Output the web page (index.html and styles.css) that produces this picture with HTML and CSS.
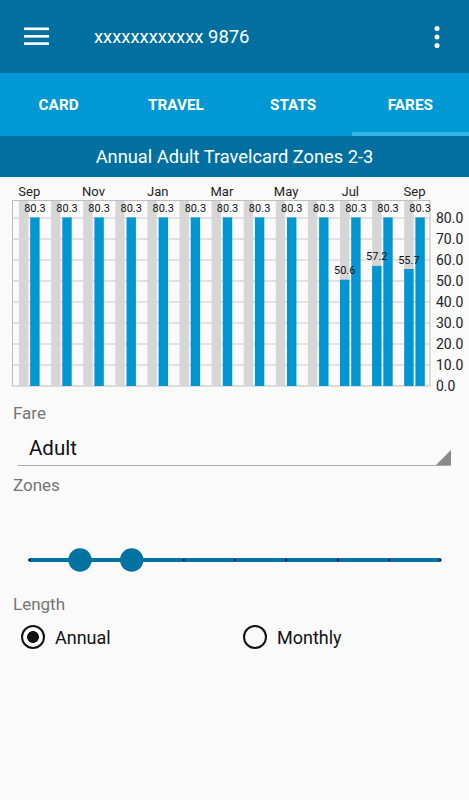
FILE: index.html
```html
<!DOCTYPE html>
<html lang="en">
<head>
  <meta charset="UTF-8">
  <title>Fares</title>
  <link rel="stylesheet" href="styles.css">
</head>
<body>

<header class="appbar">
  <svg class="menu-icon" width="26" height="20" viewBox="0 0 26 20">
    <rect x="0" y="0.5" width="25" height="2.6" fill="#fff"/>
    <rect x="0" y="8" width="25" height="2.6" fill="#fff"/>
    <rect x="0" y="15.3" width="25" height="2.6" fill="#fff"/>
  </svg>
  <div class="title">xxxxxxxxxxxx 9876</div>
  <svg class="more-icon" width="6" height="24" viewBox="0 0 6 24">
    <circle cx="3" cy="3.5" r="2.5" fill="#fff"/>
    <circle cx="3" cy="12" r="2.5" fill="#fff"/>
    <circle cx="3" cy="20.5" r="2.5" fill="#fff"/>
  </svg>
</header>

<nav class="tabs">
  <div class="tab">CARD</div>
  <div class="tab">TRAVEL</div>
  <div class="tab">STATS</div>
  <div class="tab active">FARES</div>
</nav>

<div class="subtitle">Annual Adult Travelcard Zones 2-3</div>

<!-- fare history chart -->
<svg class="chart" width="469" height="217" viewBox="0 0 469 217">
  <defs>
    <g id="grp">
      <rect x="19" y="24" width="9.4" height="185" fill="#d6d6d6"/>
      <rect x="30.2" y="40.4" width="9.4" height="168.6" fill="#0095d3"/>
      <text x="34.9" y="34.9" class="val">80.3</text>
    </g>
  </defs>

  <g class="grid">
    <line x1="12" y1="41" x2="430" y2="41"/>
    <line x1="12" y1="62" x2="430" y2="62"/>
    <line x1="12" y1="83" x2="430" y2="83"/>
    <line x1="12" y1="104" x2="430" y2="104"/>
    <line x1="12" y1="125" x2="430" y2="125"/>
    <line x1="12" y1="146" x2="430" y2="146"/>
    <line x1="12" y1="167" x2="430" y2="167"/>
    <line x1="12" y1="188" x2="430" y2="188"/>
  </g>
  <rect x="12.5" y="23.5" width="417.5" height="185.5" fill="none" stroke="#bdbdbd"/>

  <use href="#grp" x="0"/>
  <use href="#grp" x="32.1"/>
  <use href="#grp" x="64.2"/>
  <use href="#grp" x="96.3"/>
  <use href="#grp" x="128.4"/>
  <use href="#grp" x="160.5"/>
  <use href="#grp" x="192.6"/>
  <use href="#grp" x="224.7"/>
  <use href="#grp" x="256.8"/>
  <use href="#grp" x="288.9"/>
  <use href="#grp" x="321"/>
  <use href="#grp" x="353.1"/>
  <use href="#grp" x="385.2"/>

  <rect x="340" y="102.7" width="9.4" height="106.3" fill="#0095d3"/>
  <text x="344.7" y="97.2" class="val">50.6</text>
  <rect x="372.1" y="88.9" width="9.4" height="120.1" fill="#0095d3"/>
  <text x="376.8" y="83.4" class="val">57.2</text>
  <rect x="404.2" y="92" width="9.4" height="117" fill="#0095d3"/>
  <text x="408.9" y="86.5" class="val">55.7</text>

  <g class="months">
    <text x="29.3" y="19.3">Sep</text>
    <text x="93.5" y="19.3">Nov</text>
    <text x="157.7" y="19.3">Jan</text>
    <text x="221.9" y="19.3">Mar</text>
    <text x="286.1" y="19.3">May</text>
    <text x="350.3" y="19.3">Jul</text>
    <text x="414.5" y="19.3">Sep</text>
  </g>

  <g class="axis">
    <text x="436" y="46">80.0</text>
    <text x="436" y="67">70.0</text>
    <text x="436" y="88">60.0</text>
    <text x="436" y="109">50.0</text>
    <text x="436" y="130">40.0</text>
    <text x="436" y="151">30.0</text>
    <text x="436" y="172">20.0</text>
    <text x="436" y="193">10.0</text>
    <text x="436" y="214">0.0</text>
  </g>
</svg>

<div class="form">
  <div class="field-label fare-label">Fare</div>
  <div class="spinner">Adult</div>

  <div class="field-label zones-label">Zones</div>
  <svg class="slider" width="443" height="24" viewBox="0 0 443 24">
    <line x1="16" y1="12" x2="428" y2="12" stroke="#0071a3" stroke-width="4"/>
    <g fill="#111">
      <rect x="15.3" y="11" width="2" height="2"/>
      <rect x="169.5" y="11" width="2" height="2"/>
      <rect x="220.9" y="11" width="2" height="2"/>
      <rect x="272.3" y="11" width="2" height="2"/>
      <rect x="323.7" y="11" width="2" height="2"/>
      <rect x="375.1" y="11" width="2" height="2"/>
      <rect x="426.5" y="11" width="2" height="2"/>
    </g>
    <circle cx="67" cy="12" r="11.7" fill="#0071a3"/>
    <circle cx="118.7" cy="12" r="11.7" fill="#0071a3"/>
  </svg>

  <div class="field-label length-label">Length</div>
  <div class="radio-row">
    <div class="radio-item">
      <span class="radio checked"></span>
      <span>Annual</span>
    </div>
    <div class="radio-item">
      <span class="radio"></span>
      <span>Monthly</span>
    </div>
  </div>
</div>

</body>
</html>
```

FILE: styles.css
```css
body { margin: 0; background: #fafafa; font-family: Roboto, "Liberation Sans", sans-serif; color: #111; }

.appbar { height: 73px; background: #0170a0; display: flex; align-items: center; color: #fff; }
.menu-icon { margin-left: 24px; margin-top: 1px; }
.title { margin-left: 44px; font-size: 18.4px; flex: 1; }
.more-icon { margin-right: 29px; }

.tabs { height: 63px; background: #0098d5; display: grid; grid-template-columns: repeat(4, 1fr); }
.tab { position: relative; display: flex; align-items: center; justify-content: center; color: #fff; font-weight: bold; font-size: 15.3px; }
.tab.active::after { content: ""; position: absolute; left: 0; right: 0; bottom: 0; height: 4px; background: #35b4e6; }

.subtitle { height: 41px; background: #0170a0; color: #fff; font-size: 18.3px; display: flex; align-items: center; justify-content: center; }

.chart { display: block; }
.chart .grid line { stroke: #c8c8c8; stroke-width: 1; }
.chart .val { font-size: 11px; text-anchor: middle; fill: #111; }
.chart .months text { font-size: 13px; text-anchor: middle; fill: #222; }
.chart .axis text { font-size: 14px; fill: #222; }

.form { padding: 0 13px; }
.field-label { font-size: 17px; line-height: 20px; color: #757575; }
.fare-label { margin-top: 9px; }
.zones-label { margin-top: 9px; }
.length-label { margin-top: 22px; }

.spinner { position: relative; margin: 7px 0 0 5px; width: 433px; height: 36px; line-height: 36px; padding-left: 11px; box-sizing: border-box; border-bottom: 1px solid #ababab; font-size: 20.5px; color: #111; }
.spinner::after { content: ""; position: absolute; right: 0; bottom: 0; border-left: 15px solid transparent; border-bottom: 15px solid #8a8a8a; }

.slider { display: block; margin-top: 53px; }

.radio-row { margin-top: 11px; padding-left: 8px; display: grid; grid-template-columns: 222px 1fr; font-size: 18px; }
.radio-item { display: flex; align-items: center; gap: 10px; height: 24px; }
.radio { width: 24px; height: 24px; box-sizing: border-box; border: 2.3px solid #111; border-radius: 50%; }
.radio.checked { background: radial-gradient(circle, #111 5.6px, transparent 6.2px); }
```
